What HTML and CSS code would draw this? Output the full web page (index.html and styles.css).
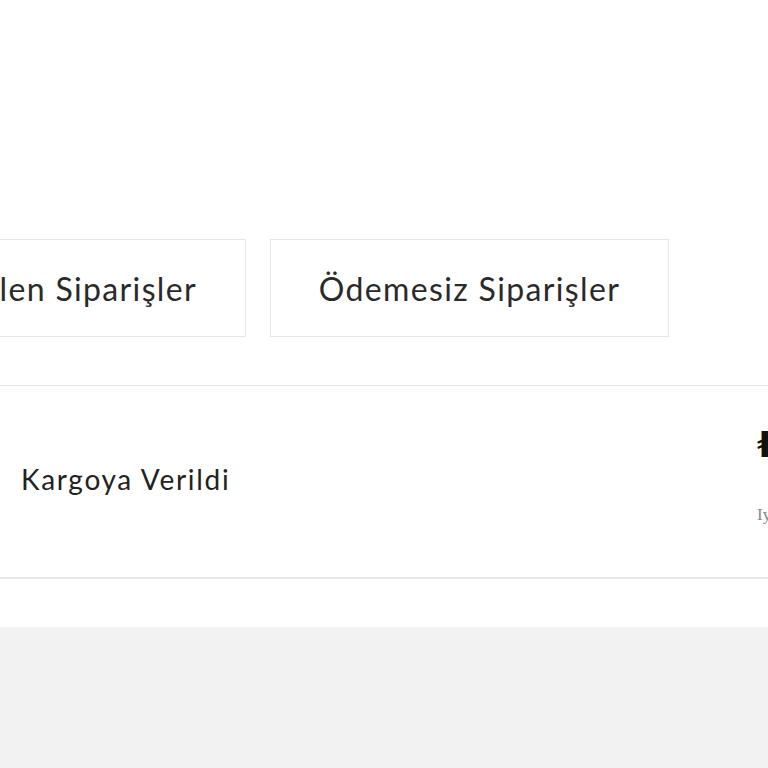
FILE: index.html
```html
<!DOCTYPE html>
<html lang="tr">
<head>
<meta charset="utf-8">
<title>Siparişlerim</title>
<link rel="stylesheet" href="styles.css">
</head>
<body>
<div class="page">
  <div class="tabs">
    <div class="tab tab-first">Teslim Edilen Siparişler</div>
    <div class="tab">Ödemesiz Siparişler</div>
  </div>
  <div class="order">
    <div class="status">Kargoya Verildi</div>
    <div class="price">
      <div class="amount">₺</div>
      <div class="pay">Iyzico</div>
    </div>
  </div>
</div>
<div class="footer"></div>
</body>
</html>
```
FILE: styles.css
```css
html, body {
  margin: 0;
  padding: 0;
  background: #f2f2f2;
  overflow: hidden;
  width: 768px;
  height: 768px;
}
.page {
  background: #ffffff;
  padding-top: 239px;
  padding-bottom: 48px;
  font-family: "Lato", "DejaVu Sans", sans-serif;
  color: #2b2b2b;
}
.tabs {
  display: flex;
  gap: 24px;
  margin-left: -230px;
}
.tab {
  flex: 0 0 auto;
  box-sizing: border-box;
  width: 399px;
  height: 98px;
  border: 1px solid #e6e6e6;
  display: flex;
  align-items: center;
  justify-content: center;
  font-size: 32px;
  letter-spacing: 1.35px;
  white-space: nowrap;
  color: #2a2a2a;
}
.tab-first {
  width: 476px;
  justify-content: flex-end;
  padding-right: 48px;
}
.order {
  margin-top: 48px;
  height: 191px;
  border-top: 1px solid #e6e6e6;
  border-bottom: 2px solid #e6e6e6;
  display: flex;
  align-items: center;
  padding-left: 21px;
  white-space: nowrap;
}
.status {
  flex: 0 0 736px;
  font-size: 28px;
  letter-spacing: 1.7px;
  color: #222;
  margin-top: -6px;
}
.price {
  flex: 0 0 auto;
  display: flex;
  flex-direction: column;
  gap: 42px;
  margin-top: -12px;
}
.amount {
  font-family: "DejaVu Sans", sans-serif;
  font-weight: bold;
  font-size: 36px;
  line-height: 36px;
  color: #111;
}
.pay {
  font-family: "Liberation Serif", serif;
  font-size: 17px;
  color: #888;
}
.footer { height: 140px; background: #f2f2f2; }
```
